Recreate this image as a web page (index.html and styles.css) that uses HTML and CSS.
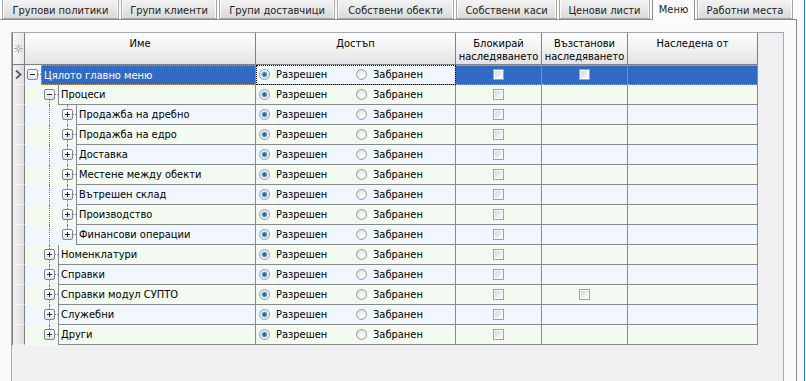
FILE: index.html
```html
<!DOCTYPE html>
<html>
<head>
<meta charset="utf-8">
<title>Меню</title>
<link rel="stylesheet" href="styles.css">
</head>
<body>
<div class="main">
  <div class="tabs">
    <div class="tab t1">Групови политики</div>
    <div class="tab t2">Групи клиенти</div>
    <div class="tab t3">Групи доставчици</div>
    <div class="tab t4">Собствени обекти</div>
    <div class="tab t5">Собствени каси</div>
    <div class="tab t6">Ценови листи</div>
    <div class="tab t7 active">Меню</div>
    <div class="tab t8">Работни места</div>
  </div>
  <div class="panel">
    <div class="ctrl">
      <div class="tree">
        <div class="th ind-h"><svg width="9" height="9" viewBox="0 0 9 9"><g stroke="#a8a8b0" stroke-width="1"><path d="M4.5 0v9M0 4.5h9M1.3 1.3l6.4 6.4M7.7 1.3l-6.4 6.4"/></g><rect x="3.5" y="3.5" width="2" height="2" fill="#f4f4f4"/></svg></div>
        <div class="th">Име</div>
        <div class="th">Достъп</div>
        <div class="th">Блокирай<br>наследяването</div>
        <div class="th">Възстанови<br>наследяването</div>
        <div class="th">Наследена от</div>

        <div class="row a sel">
          <div class="ind"><svg width="7" height="9" viewBox="0 0 7 9"><path d="M1 0.5l4.5 4-4.5 4" fill="none" stroke="#5c5c78" stroke-width="2"/></svg></div>
          <div class="nm"><span class="exp root"><i class="box minus"></i></span><span class="lbl">Цялото главно меню</span></div>
          <div class="c acc focus"><label class="opt"><i class="radio on"></i>Разрешен</label><label class="opt"><i class="radio"></i>Забранен</label></div>
          <div class="c ctr"><i class="chk"></i></div>
          <div class="c ctr"><i class="chk"></i></div>
          <div class="c"></div>
        </div>

        <div class="row b">
          <div class="ind"></div>
          <div class="nm"><span class="slot"></span><span class="exp first"><i class="box minus"></i></span><span class="lbl">Процеси</span></div>
          <div class="c acc"><label class="opt"><i class="radio on"></i>Разрешен</label><label class="opt"><i class="radio"></i>Забранен</label></div>
          <div class="c ctr"><i class="chk"></i></div>
          <div class="c"></div>
          <div class="c"></div>
        </div>

        <div class="row a">
          <div class="ind"></div>
          <div class="nm"><span class="slot"></span><span class="slot wide line"></span><span class="exp"><i class="box"></i></span><span class="lbl">Продажба на дребно</span></div>
          <div class="c acc"><label class="opt"><i class="radio on"></i>Разрешен</label><label class="opt"><i class="radio"></i>Забранен</label></div>
          <div class="c ctr"><i class="chk"></i></div>
          <div class="c"></div>
          <div class="c"></div>
        </div>

        <div class="row b">
          <div class="ind"></div>
          <div class="nm"><span class="slot"></span><span class="slot wide line"></span><span class="exp"><i class="box"></i></span><span class="lbl">Продажба на едро</span></div>
          <div class="c acc"><label class="opt"><i class="radio on"></i>Разрешен</label><label class="opt"><i class="radio"></i>Забранен</label></div>
          <div class="c ctr"><i class="chk"></i></div>
          <div class="c"></div>
          <div class="c"></div>
        </div>

        <div class="row a">
          <div class="ind"></div>
          <div class="nm"><span class="slot"></span><span class="slot wide line"></span><span class="exp"><i class="box"></i></span><span class="lbl">Доставка</span></div>
          <div class="c acc"><label class="opt"><i class="radio on"></i>Разрешен</label><label class="opt"><i class="radio"></i>Забранен</label></div>
          <div class="c ctr"><i class="chk"></i></div>
          <div class="c"></div>
          <div class="c"></div>
        </div>

        <div class="row b">
          <div class="ind"></div>
          <div class="nm"><span class="slot"></span><span class="slot wide line"></span><span class="exp"><i class="box"></i></span><span class="lbl">Местене между обекти</span></div>
          <div class="c acc"><label class="opt"><i class="radio on"></i>Разрешен</label><label class="opt"><i class="radio"></i>Забранен</label></div>
          <div class="c ctr"><i class="chk"></i></div>
          <div class="c"></div>
          <div class="c"></div>
        </div>

        <div class="row a">
          <div class="ind"></div>
          <div class="nm"><span class="slot"></span><span class="slot wide line"></span><span class="exp"><i class="box"></i></span><span class="lbl">Вътрешен склад</span></div>
          <div class="c acc"><label class="opt"><i class="radio on"></i>Разрешен</label><label class="opt"><i class="radio"></i>Забранен</label></div>
          <div class="c ctr"><i class="chk"></i></div>
          <div class="c"></div>
          <div class="c"></div>
        </div>

        <div class="row b">
          <div class="ind"></div>
          <div class="nm"><span class="slot"></span><span class="slot wide line"></span><span class="exp"><i class="box"></i></span><span class="lbl">Производство</span></div>
          <div class="c acc"><label class="opt"><i class="radio on"></i>Разрешен</label><label class="opt"><i class="radio"></i>Забранен</label></div>
          <div class="c ctr"><i class="chk"></i></div>
          <div class="c"></div>
          <div class="c"></div>
        </div>

        <div class="row a">
          <div class="ind"></div>
          <div class="nm"><span class="slot"></span><span class="slot wide line"></span><span class="exp last"><i class="box"></i></span><span class="lbl">Финансови операции</span></div>
          <div class="c acc"><label class="opt"><i class="radio on"></i>Разрешен</label><label class="opt"><i class="radio"></i>Забранен</label></div>
          <div class="c ctr"><i class="chk"></i></div>
          <div class="c"></div>
          <div class="c"></div>
        </div>

        <div class="row b">
          <div class="ind"></div>
          <div class="nm"><span class="slot"></span><span class="exp"><i class="box"></i></span><span class="lbl">Номенклатури</span></div>
          <div class="c acc"><label class="opt"><i class="radio on"></i>Разрешен</label><label class="opt"><i class="radio"></i>Забранен</label></div>
          <div class="c ctr"><i class="chk"></i></div>
          <div class="c"></div>
          <div class="c"></div>
        </div>

        <div class="row a">
          <div class="ind"></div>
          <div class="nm"><span class="slot"></span><span class="exp"><i class="box"></i></span><span class="lbl">Справки</span></div>
          <div class="c acc"><label class="opt"><i class="radio on"></i>Разрешен</label><label class="opt"><i class="radio"></i>Забранен</label></div>
          <div class="c ctr"><i class="chk"></i></div>
          <div class="c"></div>
          <div class="c"></div>
        </div>

        <div class="row b">
          <div class="ind"></div>
          <div class="nm"><span class="slot"></span><span class="exp"><i class="box"></i></span><span class="lbl">Справки модул СУПТО</span></div>
          <div class="c acc"><label class="opt"><i class="radio on"></i>Разрешен</label><label class="opt"><i class="radio"></i>Забранен</label></div>
          <div class="c ctr"><i class="chk"></i></div>
          <div class="c ctr"><i class="chk"></i></div>
          <div class="c"></div>
        </div>

        <div class="row a">
          <div class="ind"></div>
          <div class="nm"><span class="slot"></span><span class="exp"><i class="box"></i></span><span class="lbl">Служебни</span></div>
          <div class="c acc"><label class="opt"><i class="radio on"></i>Разрешен</label><label class="opt"><i class="radio"></i>Забранен</label></div>
          <div class="c ctr"><i class="chk"></i></div>
          <div class="c"></div>
          <div class="c"></div>
        </div>

        <div class="row b">
          <div class="ind"></div>
          <div class="nm"><span class="slot"></span><span class="exp last"><i class="box"></i></span><span class="lbl">Други</span></div>
          <div class="c acc"><label class="opt"><i class="radio on"></i>Разрешен</label><label class="opt"><i class="radio"></i>Забранен</label></div>
          <div class="c ctr"><i class="chk"></i></div>
          <div class="c"></div>
          <div class="c"></div>
        </div>
      </div>
    </div>
  </div>
</div>
<div class="edge"></div>
</body>
</html>
```

FILE: styles.css
```css
* { box-sizing: border-box; }
html, body { margin: 0; padding: 0; }
body {
  width: 806px;
  height: 381px;
  overflow: hidden;
  background: #ffffff;
  font-family: "DejaVu Sans Condensed", "Liberation Sans", Arial, sans-serif;
  font-size: 11px;
  color: #000;
  display: flex;
}
.main {
  width: 797px;
  height: 381px;
  display: flex;
  flex-direction: column;
  background: #f9fafa;
}
.edge {
  width: 8px;
  height: 381px;
  background: #fafafa;
  border-right: 1px solid #2f86d6;
}

/* tabs */
.tabs {
  display: flex;
  gap: 2px;
  padding-left: 2px;
  height: 19px;
  position: relative;
  z-index: 2;
  background: #fbfbfb;
}
.tab {
  height: 19px;
  border: 1px solid #a6a6a6;
  border-top: none;
  background: linear-gradient(#f2f2f2, #e6e6e6 55%, #d9d9d9);
  box-shadow: inset 1px 0 #fbfbfb, inset -1px 0 #fbfbfb;
  display: flex;
  align-items: center;
  justify-content: center;
  padding-top: 2px;
  color: #1e1e1e;
  white-space: nowrap;
}
.tab.active {
  height: 20px;
  background: #fcfcfc;
  box-shadow: none;
  border-color: #8e8e8e;
  border-bottom: none;
  padding-top: 0;
  padding-bottom: 1px;
}
.t1 { width: 117px; }
.t2 { width: 96px; }
.t3 { width: 116px; }
.t4 { width: 117px; }
.t5 { width: 101px; }
.t6 { width: 91px; }
.t7 { width: 43px; }
.t8 { width: 96px; }

/* panel */
.panel {
  flex: 1;
  display: flex;
  border-top: 1px solid #8e8e8e;
  border-right: 1px solid #8e8e8e;
  padding: 12px 12px 0 11px;
  background: #f9fafa;
}
.ctrl {
  flex: 1;
  border: 1px solid #a8a8b0;
  border-bottom: none;
  background: #f0f0f2;
}

/* tree list */
.tree {
  display: grid;
  grid-template-columns: 12px 231px 200px 86px 86px 130px;
  grid-template-rows: 32px;
  grid-auto-rows: 20px;
  width: 746px;
  border-left: 1px solid #808080;
}
.row { display: contents; }
.th {
  background: linear-gradient(#fdfdfd, #f1f1f1 50%, #e2e2e4);
  border-right: 1px solid #808080;
  border-bottom: 1px solid #808080;
  text-align: center;
  padding-top: 4px;
  line-height: 13px;
}
.ind-h {
  display: flex;
  align-items: center;
  justify-content: center;
  padding-top: 0;
  background: linear-gradient(to right, #f8f8f8, #e6e6e8);
}
.ind {
  background: linear-gradient(to right, #f4f4f4, #dcdcde);
  border-right: 1px solid #808080;
  border-bottom: 1px solid #f2f2f2;
  display: flex;
  align-items: center;
  justify-content: center;
}

.row.a > .nm, .row.a > .c { background: #f0f7ff; }
.row.b > .nm, .row.b > .c { background: #f3fbf0; }

.nm {
  display: flex;
  padding-left: 2px;
  border-right: 1px solid #8a8a8a;
}
.slot { width: 17px; position: relative; flex: none; }
.slot.wide { width: 18px; }
.slot.line::before {
  content: "";
  position: absolute;
  left: 5px;
  top: 0;
  bottom: 0;
  border-left: 1px dotted #7a7a7a;
}
.exp {
  width: 14px;
  flex: none;
  position: relative;
}
.exp::before {
  content: "";
  position: absolute;
  left: 5px;
  top: 0;
  bottom: 0;
  border-left: 1px dotted #7a7a7a;
}
.exp.first::before { top: 10px; }
.exp.last::before { bottom: 10px; }
.exp.root::before { display: none; }
.exp::after {
  content: "";
  position: absolute;
  left: 11px;
  width: 3px;
  top: 9px;
  border-top: 1px dotted #7a7a7a;
}
.box {
  position: absolute;
  left: 0;
  top: 4px;
  width: 11px;
  height: 11px;
  border: 1px solid #7d8896;
  border-radius: 2px;
  background: linear-gradient(#ffffff, #dfe2e8);
  z-index: 1;
}
.box::before {
  content: "";
  position: absolute;
  left: 2px;
  top: 4px;
  width: 5px;
  height: 1px;
  background: #2a2a2a;
}
.box::after {
  content: "";
  position: absolute;
  left: 4px;
  top: 2px;
  width: 1px;
  height: 5px;
  background: #2a2a2a;
}
.box.minus::after { display: none; }

.lbl {
  flex: 1;
  border-left: 1px solid #8a8a8a;
  border-bottom: 1px solid #8a8a8a;
  padding-left: 2px;
  display: flex;
  align-items: center;
  white-space: nowrap;
}

.c {
  border-right: 1px solid #8a8a8a;
  border-bottom: 1px solid #8a8a8a;
  display: flex;
  align-items: center;
}
.ctr { justify-content: center; }
.acc { padding-left: 3px; }
.opt {
  display: flex;
  align-items: center;
  width: 97px;
}
.radio {
  width: 11px;
  height: 11px;
  border-radius: 50%;
  border: 1px solid #9c9c9c;
  background: radial-gradient(circle at 60% 65%, #ffffff 0, #f2f2f2 40%, #d6d6d6 100%);
  margin-right: 6px;
  flex: none;
}
.radio.on {
  background: radial-gradient(circle, #1e5f96 0, #2c78b4 1.6px, #8cc0e4 2.6px, #d8e8f2 3.2px, #f6f6f6 3.8px, #dcdcdc 100%);
}
.chk {
  width: 11px;
  height: 11px;
  border: 1px solid #a2a2a2;
  box-shadow: inset 0 0 0 1px #ffffff;
  background: linear-gradient(135deg, #cfd0d8, #f4f4f6 70%, #ffffff);
}

/* selected row */
.row.sel > .nm .lbl {
  background: #316ac5;
  color: #fff;
  border: 1px dotted #c8a468;
  border-right: none;
}
.row.sel > .c:not(.focus) {
  background: #316ac5;
  border-bottom: 1px dotted #c8a468;
  box-shadow: inset 0 1px 0 #b49a6c;
}
.row.sel > .c.focus {
  outline: 1px dotted #000;
  outline-offset: -1px;
}
```
